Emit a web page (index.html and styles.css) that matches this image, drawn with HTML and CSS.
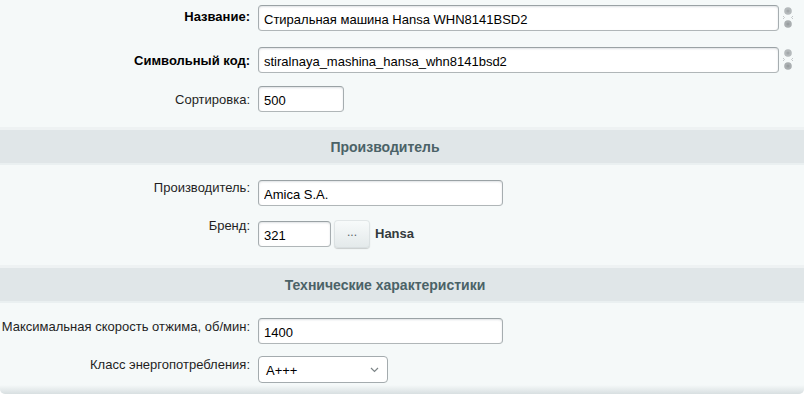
FILE: index.html
```html
<!DOCTYPE html>
<html lang="ru">
<head>
<meta charset="utf-8">
<title>Элемент</title>
<link rel="stylesheet" href="styles.css">
</head>
<body>
<div class="card">
  <div class="row r1 center">
    <div class="label bold">Название:</div>
    <div class="field">
      <input class="inp w-full" type="text" value="Стиральная машина Hansa WHN8141BSD2">
      <svg class="link-ico" width="12" height="22" viewBox="0 0 12 22"><circle cx="6" cy="4" r="3.8" fill="#b4b9bb"/><circle cx="6" cy="4" r="1.6" fill="#a3a8aa"/><circle cx="6" cy="17" r="3.8" fill="#a9aeb0"/><circle cx="6" cy="17" r="1.6" fill="#999ea0"/><path d="M1 9l1.5 1.5L1 12M11 9l-1.5 1.5L11 12" stroke="#c2c6c8" stroke-width="1" fill="none"/></svg>
    </div>
  </div>
  <div class="row r2 center">
    <div class="label bold">Символьный код:</div>
    <div class="field">
      <input class="inp w-full" type="text" value="stiralnaya_mashina_hansa_whn8141bsd2">
      <svg class="link-ico" width="12" height="22" viewBox="0 0 12 22"><circle cx="6" cy="4" r="3.8" fill="#b4b9bb"/><circle cx="6" cy="4" r="1.6" fill="#a3a8aa"/><circle cx="6" cy="17" r="3.8" fill="#a9aeb0"/><circle cx="6" cy="17" r="1.6" fill="#999ea0"/><path d="M1 9l1.5 1.5L1 12M11 9l-1.5 1.5L11 12" stroke="#c2c6c8" stroke-width="1" fill="none"/></svg>
    </div>
  </div>
  <div class="row r3 center">
    <div class="label">Сортировка:</div>
    <div class="field">
      <input class="inp w-sort" type="text" value="500">
    </div>
  </div>

  <div class="section s1"><span>Производитель</span></div>

  <div class="row r4 top">
    <div class="label">Производитель:</div>
    <div class="field">
      <input class="inp w-mid" type="text" value="Amica S.A.">
    </div>
  </div>
  <div class="row r5 top">
    <div class="label">Бренд:</div>
    <div class="field">
      <input class="inp w-brand" type="text" value="321">
      <button class="btn" type="button">...</button>
      <span class="brand-name">Hansa</span>
    </div>
  </div>

  <div class="section s2"><span>Технические характеристики</span></div>

  <div class="row r6 top">
    <div class="label">Максимальная скорость отжима, об/мин:</div>
    <div class="field">
      <input class="inp w-mid" type="text" value="1400">
    </div>
  </div>
  <div class="row r7 top">
    <div class="label">Класс энергопотребления:</div>
    <div class="field">
      <div class="select">
        <span>A+++</span>
        <svg width="9" height="6" viewBox="0 0 9 6"><path d="M1 1l3.5 3.5L8 1" stroke="#7d8587" stroke-width="1.2" fill="none"/></svg>
      </div>
    </div>
  </div>
  <div class="bottom"></div>
</div>
</body>
</html>
```

FILE: styles.css
```css
html, body {
  margin: 0;
  padding: 0;
  background: #ffffff;
}
body {
  font-family: "Liberation Sans", Arial, sans-serif;
  font-size: 13px;
  color: #000;
}
.card {
  width: 804px;
  height: 394px;
  background: #f5f9f9;
  border-radius: 0 0 5px 5px;
  overflow: hidden;
  display: flex;
  flex-direction: column;
  box-sizing: border-box;
  padding-top: 5px;
}
.row {
  display: flex;
}
.row.center { align-items: center; }
.row.top { align-items: flex-start; }
.label {
  width: 250px;
  flex: none;
  text-align: right;
  line-height: 15px;
  color: #1f1f1f;
  margin-right: 8px;
}
.bold { font-weight: bold; color: #000; }
.r1 .label { margin-top: -4px; }
.r2 { margin-top: 16px; }
.r3 { margin-top: 13px; }
.r4 { margin-top: 17px; }
.r5 { margin-top: 14px; }
.r5 .label { margin-top: -2px; }
.r6 { margin-top: 17px; }
.r6 .label { margin-top: 1px; }
.r7 { margin-top: 12px; }
.r7 .label { margin-top: 1px; }
.field {
  display: flex;
  align-items: center;
}
.inp {
  box-sizing: border-box;
  height: 26px;
  border: 1px solid #a4abae;
  border-color: #9aa2a5 #a6adb0 #b0b6b8 #a6adb0;
  border-radius: 4px;
  background: #fff;
  box-shadow: inset 0 1px 2px rgba(160,170,174,0.35);
  padding: 2px 5px 0;
  font-family: "Liberation Sans", Arial, sans-serif;
  font-size: 13px;
  color: #000;
  outline: none;
  margin: 0;
}
.w-full { width: 521px; }
.w-sort { width: 86px; }
.w-mid { width: 245px; }
.w-brand { width: 73px; }
.link-ico {
  margin-left: 3px;
  display: block;
}
.btn {
  box-sizing: border-box;
  width: 36px;
  height: 28px;
  margin: 0 0 0 3px;
  padding: 0 0 4px;
  border: none;
  border-radius: 4px;
  background: linear-gradient(#f8fbfb, #e3e9ea);
  box-shadow: 0 1px 1px rgba(0,0,0,0.18), inset 0 0 0 1px rgba(210,216,218,0.6);
  font-family: "Liberation Sans", Arial, sans-serif;
  font-size: 12px;
  color: #5a6468;
  align-self: flex-start;
}
.brand-name {
  margin-left: 5px;
  font-weight: bold;
  color: #333b3d;
  align-self: flex-start;
  margin-top: 6px;
}
.section {
  height: 33px;
  background: #e0e6e8;
  display: flex;
  align-items: center;
  justify-content: center;
  padding-right: 34px;
  font-weight: bold;
  font-size: 14px;
  color: #4b6267;
  box-shadow: 0 -3px 0 #eef2f3, 0 2px 0 #eaf0f1;
}
.s1 { margin-top: 18px; }
.s2 { margin-top: 20px; }
.select {
  box-sizing: border-box;
  width: 130px;
  height: 27px;
  border: 1px solid #a4abae;
  border-radius: 4px;
  background: #fff;
  display: flex;
  align-items: center;
  justify-content: space-between;
  padding: 2px 8px 0 7px;
  color: #000;
}
.select svg { display: block; margin-top: -1px; }
.bottom {
  margin-top: auto;
  height: 9px;
  background: linear-gradient(#f5f9f9, #d8dfe1);
}
```
